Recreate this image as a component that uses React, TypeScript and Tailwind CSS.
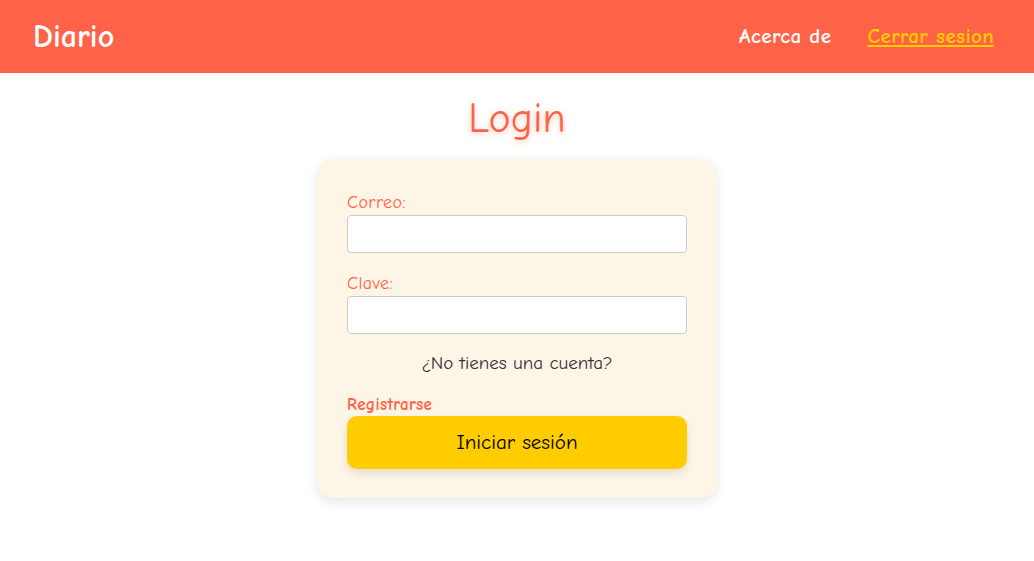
import React from "react";

const font = { fontFamily: "'Comic Sans MS', 'Comic Neue', 'Noto Sans', sans-serif" };

export default function App() {
  return (
    <div className="min-h-screen bg-white" style={font}>
      <header className="h-[73px] bg-[#ff6347] flex items-center justify-between pl-[33px] pr-[40px]">
        <h1 className="text-[32px] font-bold text-white leading-none">Diario</h1>
        <nav className="flex items-center gap-[36px] text-[21px] tracking-[0.4px] font-bold">
          <a className="text-white">Acerca de</a>
          <a className="text-[#ffcc00] underline">Cerrar sesion</a>
        </nav>
      </header>
      <main className="flex flex-col items-center">
        <h2 className="mt-[20px] text-[42px] leading-[52px] text-[#ff6347] [text-shadow:0_2px_6px_rgba(255,99,71,0.35)]">Login</h2>
        <div className="mt-[14px] w-[400px] bg-[#fdf5e6] rounded-[16px] shadow-[0_4px_12px_rgba(0,0,0,0.1)] px-[30px] pt-[32px] pb-[29px]">
          <label className="block text-[18px] tracking-[0.4px] leading-[24px] text-[#ff6347]">Correo:</label>
          <input className="block w-full h-[38px] bg-white border border-[#ccc] rounded-[4px]" />
          <label className="mt-[19px] block text-[18px] tracking-[0.4px] leading-[24px] text-[#ff6347]">Clave:</label>
          <input type="password" className="block w-full h-[38px] bg-white border border-[#ccc] rounded-[4px]" />
          <p className="mt-[17px] text-center text-[19px] leading-[24px] text-[#333]">¿No tienes una cuenta?</p>
          <a className="mt-[19px] block text-[17px] tracking-[0.3px] leading-[22px] font-bold text-[#ff6347]">Registrarse</a>
          <button className="block w-full h-[53px] bg-[#ffcc00] rounded-[10px] text-[21px] text-black shadow-[0_4px_8px_rgba(0,0,0,0.1)]">Iniciar sesión</button>
        </div>
      </main>
    </div>
  );
}
